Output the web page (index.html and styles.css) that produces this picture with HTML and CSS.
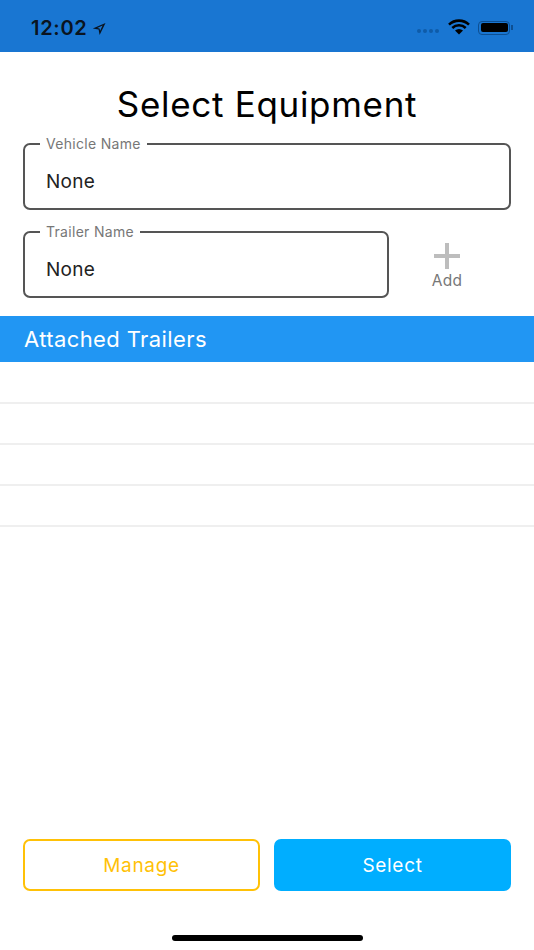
FILE: index.html
```html
<!DOCTYPE html>
<html lang="en">
<head>
<meta charset="utf-8">
<title>Select Equipment</title>
<link rel="stylesheet" href="styles.css">
</head>
<body>
<div class="screen">
	<div class="status">
		<div class="status-left">
			<span class="time">12:02</span>
			<svg class="arrow" width="14" height="14" viewBox="0 0 14 14"><path d="M13.5 1 L0.8 6.6 L6.6 7.6 L7.6 13 Z M10.6 3.6 L5.2 6 L7.6 6.5 L8.1 8.8 Z" fill="#0a1420" fill-rule="evenodd"/></svg>
		</div>
		<div class="status-right">
			<span class="signal"><i></i><i></i><i></i><i></i></span>
			<svg class="wifi" width="22" height="16" viewBox="0 0 22 16"><path d="M1 5.6 A14.5 14.5 0 0 1 21 5.6 M4.3 9 A9.6 9.6 0 0 1 17.7 9" fill="none" stroke="#000" stroke-width="2.6"/><path d="M7 11.6 A6 6 0 0 1 15 11.6 L11 15.6 Z" fill="#000"/></svg>
			<span class="battery"><span class="battery-fill"></span></span>
			<span class="battery-cap"></span>
		</div>
	</div>

	<h1 class="title">Select Equipment</h1>

	<div class="form">
		<div class="field">
			<label class="field-label">Vehicle Name</label>
			<div class="field-value">None</div>
		</div>
		<div class="trailer-row">
			<div class="field field-grow">
				<label class="field-label">Trailer Name</label>
				<div class="field-value">None</div>
			</div>
			<div class="add">
				<svg width="26" height="26" viewBox="0 0 26 26"><path d="M13 0V26M0 13H26" stroke="#bdbdbd" stroke-width="4"/></svg>
				<span class="add-text">Add</span>
			</div>
		</div>
	</div>

	<div class="section-head">Attached Trailers</div>
	<ul class="list">
		<li></li>
		<li></li>
		<li></li>
		<li></li>
	</ul>

	<div class="actions">
		<a class="btn btn-manage" href="#">Manage</a>
		<a class="btn btn-select" href="#">Select</a>
	</div>
	<div class="home-wrap"><div class="home-bar"></div></div>
</div>
</body>
</html>
```

FILE: styles.css
```css
* {margin:0; padding:0; box-sizing:border-box;}
html, body {width:534px; height:950px; overflow:hidden;}
body {background:#fff; font-family:"Inter","Liberation Sans",sans-serif; color:#000;}
.screen {width:534px; height:950px; display:flex; flex-direction:column;}

.status {height:52px; background:#1976d2; display:flex; justify-content:space-between; align-items:center; padding:3px 21px 0 31px; flex:none;}
.status-left {display:flex; align-items:center; gap:5px;}
.time {font-size:20px; font-weight:600; color:#0a1420; letter-spacing:.7px; line-height:24px;}
.arrow {margin-top:2px;}
.status-right {display:flex; align-items:center;}
.signal {display:flex; gap:2px; margin:6px 9px 0 0;}
.signal i {width:4px; height:4px; border-radius:50%; background:#0f5ba8;}
.wifi {margin:-2px 8px 0 0;}
.battery {width:32px; height:14px; border:1px solid #0d4f92; border-radius:4px; padding:1.5px; display:block;}
.battery-fill {display:block; height:100%; background:#000; border-radius:2px;}
.battery-cap {width:2px; height:5px; background:#0d4f92; margin-left:1px;}

.title {font-size:35px; font-weight:400; line-height:40px; text-align:center; letter-spacing:.7px; margin-top:32px; height:59px; color:#000; flex:none;}

.form {padding:0 23px; display:flex; flex-direction:column; gap:21px; flex:none;}
.field {position:relative; height:67px; border:2px solid #555; border-radius:7px; padding:25px 21px 0 21px;}
.field-grow {flex:1;}
.field-label {position:absolute; left:15px; top:-9px; padding:0 6px; background:#fff; font-size:14px; line-height:15px; color:#777; letter-spacing:.3px;}
.field-value {font-size:19px; line-height:24px; color:#222; letter-spacing:.3px;}
.trailer-row {display:flex; align-items:flex-start;}
.add {width:122px; flex:none; display:flex; flex-direction:column; align-items:center; padding:12px 6px 0 0;}
.add-text {font-size:15.5px; line-height:18px; color:#777; margin-top:3px; letter-spacing:.3px;}

.section-head {height:46px; margin-top:18px; background:#2196f3; color:#fff; font-size:22px; line-height:47px; padding-left:24px; letter-spacing:.4px; flex:none;}
.list {list-style:none; padding-top:1px; flex:none;}
.list li {height:41px; border-bottom:2px solid #efefef;}

.actions {margin-top:auto; padding:0 23px; display:grid; grid-template-columns:1fr 1fr; gap:14px; flex:none;}
.btn {height:52px; border-radius:7px; display:flex; align-items:center; justify-content:center; font-size:19px; text-decoration:none; letter-spacing:.7px;}
.btn-manage {border:2px solid #ffc107; color:#ffc107;}
.btn-select {background:#00aeff; color:#fff;}

.home-wrap {height:59px; padding-top:44px; display:flex; justify-content:center; flex:none;}
.home-bar {width:191px; height:6px; background:#000; border-radius:3px;}
```
